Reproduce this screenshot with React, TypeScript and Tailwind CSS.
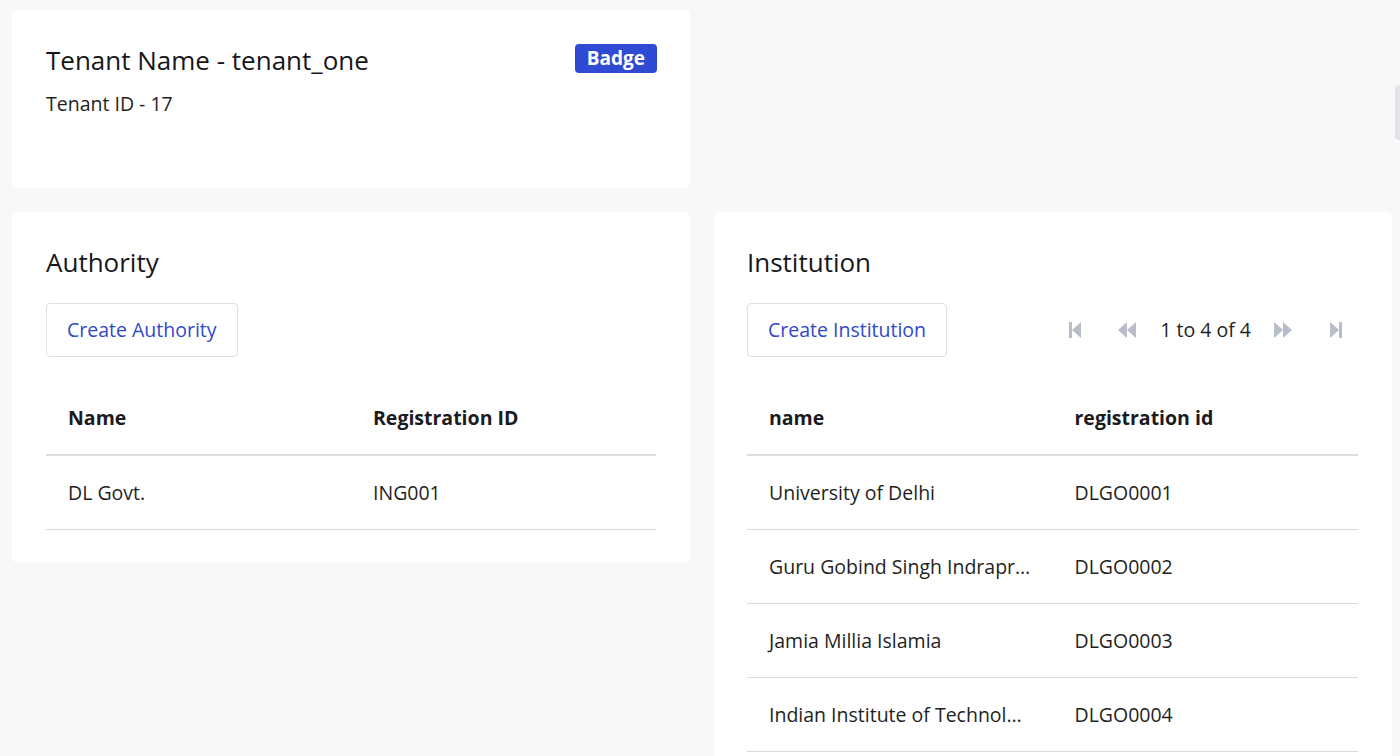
const font = { fontFamily: '"Open Sans", "Noto Sans", sans-serif' };

const authorities = [{ name: "DL Govt.", regId: "ING001" }];

const institutions = [
  { name: "University of Delhi", regId: "DLGO0001" },
  { name: "Guru Gobind Singh Indraprastha University", regId: "DLGO0002" },
  { name: "Jamia Millia Islamia", regId: "DLGO0003" },
  { name: "Indian Institute of Technology Delhi", regId: "DLGO0004" },
];

const FirstIcon = () => (
  <svg width="14" height="18" viewBox="0 0 14 18" fill="#b9bdc9">
    <rect x="1" y="1" width="3" height="16" />
    <path d="M13 1 L4 9 L13 17 Z" />
  </svg>
);

const PrevIcon = () => (
  <svg width="20" height="18" viewBox="0 0 20 18" fill="#b9bdc9">
    <path d="M10 1 L1 9 L10 17 Z" />
    <path d="M19 1 L10 9 L19 17 Z" />
  </svg>
);

const NextIcon = () => (
  <svg width="20" height="18" viewBox="0 0 20 18" fill="#b9bdc9">
    <path d="M1 1 L10 9 L1 17 Z" />
    <path d="M10 1 L19 9 L10 17 Z" />
  </svg>
);

const LastIcon = () => (
  <svg width="14" height="18" viewBox="0 0 14 18" fill="#b9bdc9">
    <path d="M1 1 L10 9 L1 17 Z" />
    <rect x="10" y="1" width="3" height="16" />
  </svg>
);

type Row = { name: string; regId: string };

const DataTable = ({ headers, rows }: { headers: [string, string]; rows: Row[] }) => (
  <div className="mt-[25px]">
    <div className="grid grid-cols-2 h-[74px] items-center border-b-2 border-[#dcdde2]">
      <div className="px-[22px] text-[19.5px] font-bold text-[#1b1b1f]">{headers[0]}</div>
      <div className="px-[22px] text-[19.5px] font-bold text-[#1b1b1f]">{headers[1]}</div>
    </div>
    {rows.map((r) => (
      <div key={r.regId} className="grid grid-cols-2 h-[74px] items-center border-b border-[#d9dadf]">
        <div className="px-[22px] text-[19.5px] text-[#1f1f23] truncate">{r.name}</div>
        <div className="px-[22px] text-[19.5px] text-[#1f1f23] truncate">{r.regId}</div>
      </div>
    ))}
  </div>
);

const ActionButton = ({ label }: { label: string }) => (
  <button className="h-[54px] px-[20px] rounded-[4px] border border-[#dedfe3] bg-white text-[19.5px] text-[#3049c9]">
    {label}
  </button>
);

export default function App() {
  return (
    <div style={font} className="relative h-screen overflow-hidden bg-[#f8f8f8] pl-3 pt-[10px]">
      <div className="grid grid-cols-[678px_678px] gap-x-6 gap-y-6 items-start">
        {/* tenant card */}
        <div className="h-[178px] bg-white rounded-[6px] pl-[34px] pr-[33px] pt-[34px]">
          <div className="flex items-start justify-between">
            <h1 className="text-[26px] leading-[32px] text-[#17171b]">Tenant Name - tenant_one</h1>
            <span className="h-[29px] px-[12px] flex items-center rounded-[4px] bg-[#2f4bd3] text-white text-[19px] font-bold">
              Badge
            </span>
          </div>
          <p className="mt-[14px] text-[19.5px] leading-[28px] text-[#1f1f23]">Tenant ID - 17</p>
        </div>
        <div />

        {/* authority card */}
        <div className="bg-white rounded-[6px] px-[34px] pt-[34px] pb-[33px]">
          <h2 className="text-[26px] leading-[32px] text-[#17171b]">Authority</h2>
          <div className="mt-[25px]">
            <ActionButton label="Create Authority" />
          </div>
          <DataTable headers={["Name", "Registration ID"]} rows={authorities} />
        </div>

        {/* institution card */}
        <div className="bg-white rounded-[6px] pl-[33px] pr-[34px] pt-[34px] pb-[34px]">
          <h2 className="text-[26px] leading-[32px] text-[#17171b]">Institution</h2>
          <div className="mt-[25px] flex items-center justify-between">
            <ActionButton label="Create Institution" />
            <div className="flex items-center pr-[10px] text-[19.5px] text-[#1f1f23]">
              <span className="w-6 flex justify-center"><FirstIcon /></span>
              <span className="ml-[28px] w-6 flex justify-center"><PrevIcon /></span>
              <span className="ml-[21px]">1 to 4 of 4</span>
              <span className="ml-[20px] w-6 flex justify-center"><NextIcon /></span>
              <span className="ml-[29px] w-6 flex justify-center"><LastIcon /></span>
            </div>
          </div>
          <DataTable headers={["name", "registration id"]} rows={institutions} />
        </div>
      </div>
      <div className="absolute right-0 top-[85px] w-[5px] h-[55px] bg-[#e2e3e8] rounded-l-sm" />
    </div>
  );
}
